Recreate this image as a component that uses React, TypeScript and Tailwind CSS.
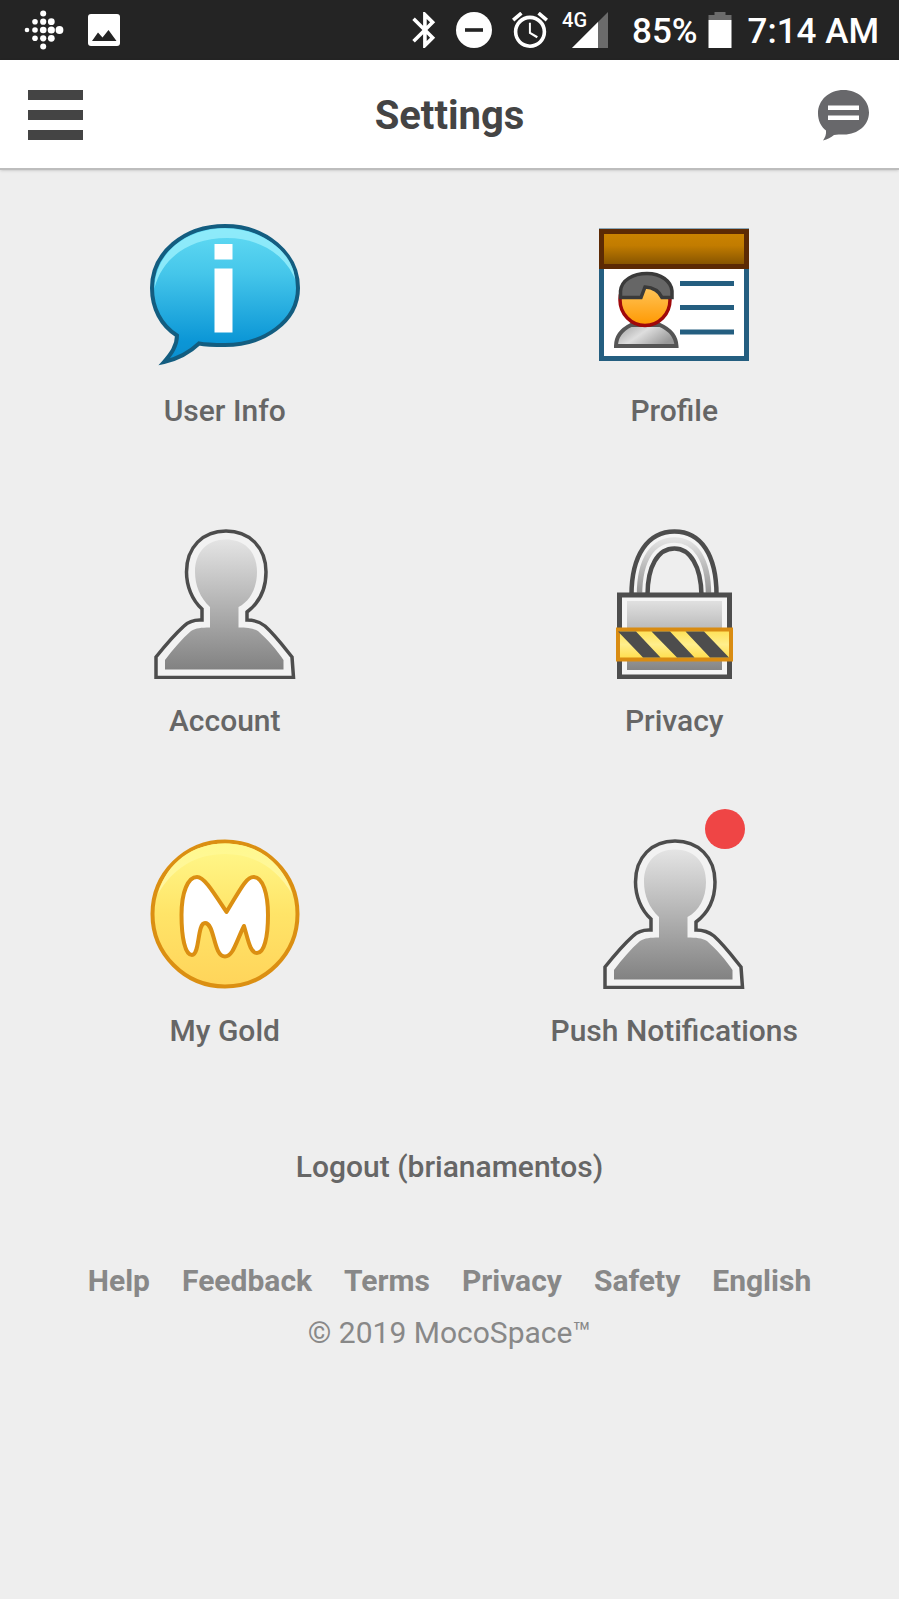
import type { ReactNode } from 'react';

interface SettingsItem {
  label: string;
  href: string;
  icon: ReactNode;
  badge?: boolean;
}

const FitbitIcon = () => (
  <svg viewBox="0 0 40 40" className="h-10 w-10" fill="#fff" aria-hidden="true">
    <circle cx="3" cy="20" r="2.3" />
    <circle cx="11" cy="11.7" r="2.8" />
    <circle cx="11" cy="20" r="2.8" />
    <circle cx="11" cy="28.3" r="2.8" />
    <circle cx="19.2" cy="3.5" r="3" />
    <circle cx="19.2" cy="11.7" r="3.1" />
    <circle cx="19.2" cy="20" r="3.3" />
    <circle cx="19.2" cy="28.3" r="3.1" />
    <circle cx="19.2" cy="36.5" r="3" />
    <circle cx="27.3" cy="11.7" r="3.4" />
    <circle cx="27.3" cy="20" r="3.6" />
    <circle cx="27.3" cy="28.3" r="3.4" />
    <circle cx="35.5" cy="20" r="3.9" />
  </svg>
);

const PictureIcon = () => (
  <svg viewBox="0 0 32 32" className="h-8 w-8" aria-hidden="true">
    <rect width="32" height="32" rx="3" fill="#fff" />
    <path d="M4 27L10 18.5L14.5 23.5L20.5 16L28.5 27Z" fill="#242424" />
  </svg>
);

const BluetoothIcon = () => (
  <svg viewBox="5 2 13 20" className="h-9 w-6" fill="#fff" aria-hidden="true">
    <path d="M17.71 7.71L12 2h-1v7.59L6.41 5 5 6.41 10.59 12 5 17.59 6.41 19 11 14.41V22h1l5.71-5.71-4.3-4.29 4.3-4.29zM13 5.83l1.88 1.88L13 9.59V5.83zm1.88 10.46L13 18.17v-3.76l1.88 1.88z" />
  </svg>
);

const DoNotDisturbIcon = () => (
  <svg viewBox="0 0 36 36" className="h-9 w-9" aria-hidden="true">
    <circle cx="18" cy="18" r="18" fill="#fff" />
    <rect x="9" y="16.2" width="18" height="3.6" fill="#242424" />
  </svg>
);

const AlarmIcon = () => (
  <svg viewBox="2 2 20 20" className="h-9 w-9" fill="#fff" aria-hidden="true">
    <path d="M22 5.72l-4.6-3.86-1.29 1.53 4.6 3.86L22 5.72zM7.88 3.39L6.6 1.86 2 5.71l1.29 1.53 4.59-3.85zM12.5 8H11.4v6l4.35 2.6.65-1.1-3.9-2.25V8zM12 4c-4.97 0-9 4.03-9 9s4.02 9 9 9a9 9 0 0 0 0-18zm0 16c-3.87 0-7-3.13-7-7s3.13-7 7-7 7 3.13 7 7-3.13 7-7 7z" />
  </svg>
);

const SignalIcon = () => (
  <svg viewBox="0 0 36 36" className="h-9 w-9" aria-hidden="true">
    <path d="M0 36L36 0V36Z" fill="#6b6b6b" />
    <path d="M0 36L26 10V36Z" fill="#fff" />
  </svg>
);

const BatteryIcon = () => (
  <svg viewBox="0 0 23 36" className="h-9 w-6" aria-hidden="true">
    <path d="M6 0H17V3H23V8H0V3H6Z" fill="#6b6b6b" />
    <rect y="8" width="23" height="28" fill="#fff" />
  </svg>
);

const ChatIcon = () => (
  <svg viewBox="0 0 51 51" className="h-[51px] w-[51px]" aria-hidden="true">
    <path
      d="M8 40.5C3 36.5 0 30.5 0 23.5C0 10 11 0 25.5 0C40 0 51 10 51 22.5C51 35 40 44.5 26 44.5C22 44.5 19 44.5 16 45C13 47.5 9.5 49.5 5 50.5C7 47.5 8.5 44.5 8 40.5Z"
      fill="#68686b"
    />
    <rect x="10" y="15.5" width="31" height="4.5" fill="#fff" />
    <rect x="10" y="25.5" width="31" height="4.5" fill="#fff" />
  </svg>
);

const InfoIcon = () => (
  <svg viewBox="0 0 150 150" className="h-full w-full" aria-hidden="true">
    <defs>
      <linearGradient id="info-fill" x1="0" y1="0" x2="0" y2="1">
        <stop offset="0" stopColor="#63dcf4" />
        <stop offset="0.35" stopColor="#45c6ea" />
        <stop offset="0.85" stopColor="#0b96d6" />
        <stop offset="1" stopColor="#0b8fcf" />
      </linearGradient>
    </defs>
    <path
      d="M27 116.5C11 106.5 2 89 2 69C2 34 34 7 75 7C116 7 148 35 148 69C148 103 113 126 75 126C66 126 57 126 49 124.5C39 134 27 140 14 143C21 135 27 127 27 116.5Z"
      fill="url(#info-fill)"
      stroke="#135d80"
      strokeWidth="4"
    />
    <path
      d="M4.5 69C5 35 35 9.5 75 9.5C112 9.5 143 33 145 60C135 36 110 19 77 19C38 19 12 40 4.5 69Z"
      fill="#92ecfb"
      opacity="0.9"
    />
    <rect x="64.5" y="25" width="18" height="15.5" fill="#fff" />
    <rect x="64.5" y="49.5" width="18" height="64" fill="#fff" />
  </svg>
);

const ProfileIcon = () => (
  <svg viewBox="0 0 150 150" className="h-full w-full" aria-hidden="true">
    <defs>
      <linearGradient id="profile-bar" x1="0" y1="0" x2="0" y2="1">
        <stop offset="0" stopColor="#cc8400" />
        <stop offset="0.4" stopColor="#c27c00" />
        <stop offset="1" stopColor="#805000" />
      </linearGradient>
      <linearGradient id="profile-face" x1="0" y1="0" x2="0" y2="1">
        <stop offset="0.2" stopColor="#ffc860" />
        <stop offset="1" stopColor="#ff9800" />
      </linearGradient>
      <linearGradient id="profile-shirt" x1="0" y1="0" x2="1" y2="0.5">
        <stop offset="0" stopColor="#999" />
        <stop offset="0.5" stopColor="#dedede" />
        <stop offset="1" stopColor="#999" />
      </linearGradient>
    </defs>
    <rect x="2.5" y="12" width="145" height="127.5" fill="#fff" stroke="#245e80" strokeWidth="5" />
    <rect x="2.5" y="12.5" width="145" height="35" fill="url(#profile-bar)" stroke="#5c2a04" strokeWidth="5" />
    <path
      d="M17 127C17 117 24 110 32 106H61C70 110 77 117 77.5 127Z"
      fill="url(#profile-shirt)"
      stroke="#555"
      strokeWidth="4"
    />
    <ellipse cx="46" cy="81" rx="25" ry="25.5" fill="url(#profile-face)" stroke="#a0080a" strokeWidth="3.5" />
    <path
      d="M21.5 78.5V72C22.5 61 34 54.5 48 54.5C62 54.5 72 62 73 72V78.5H63C60 72 54 68.5 46 68L42 78.5Z"
      fill="#666"
      stroke="#3a3a3a"
      strokeWidth="3.5"
    />
    <path d="M81 64.5H135M81 88.5H135M81 113H135" stroke="#245e80" strokeWidth="5" />
  </svg>
);

const PersonIcon = ({ id }: { id: string }) => (
  <svg viewBox="0 0 150 150" className="h-full w-full" aria-hidden="true">
    <defs>
      <linearGradient id={id} x1="0" y1="0" x2="0" y2="1">
        <stop offset="0" stopColor="#e4e4e4" />
        <stop offset="1" stopColor="#828282" />
      </linearGradient>
    </defs>
    <path
      d="M6 148.5V128C14 118 23 107 34 97C39 92 44 90.5 52 91V80C42 71 36.5 57 36.5 43C36.5 18 53 2 76 2C99 2 116 18 116 43C116 60 109 74 97 83V91C105 91 110 93 115 97C125 106 134 118 142 128L143.5 148.5Z"
      fill="#f2f2f2"
      stroke="#4d4d4d"
      strokeWidth="3.5"
    />
    <path
      d="M15 140.5V131C23 120 32 110 41 102C46 99 51 98.5 60 98.5V78C50 69 45 56 45 43C45 23 57 10.5 76 10.5C95 10.5 107 23 107 43C107 59 100 72 88.5 78V98.5C97 98.5 103 99 108 102C117 110 127 121 133.5 131V140.5Z"
      fill={`url(#${id})`}
    />
  </svg>
);

const LockIcon = () => (
  <svg viewBox="0 0 150 150" className="h-full w-full" aria-hidden="true">
    <defs>
      <linearGradient id="lock-body" x1="0" y1="0" x2="0" y2="1">
        <stop offset="0" stopColor="#e0e0e0" />
        <stop offset="1" stopColor="#858585" />
      </linearGradient>
      <linearGradient id="lock-shackle" x1="0" y1="0" x2="0" y2="1">
        <stop offset="0" stopColor="#e2e2e2" />
        <stop offset="1" stopColor="#929292" />
      </linearGradient>
      <linearGradient id="lock-band" x1="0" y1="0" x2="0" y2="1">
        <stop offset="0" stopColor="#ffe052" />
        <stop offset="0.5" stopColor="#ffee8c" />
        <stop offset="1" stopColor="#ffdc48" />
      </linearGradient>
    </defs>
    <path
      d="M32.5 66C32.5 26 49 2.5 75.5 2.5C102 2.5 117.5 26 117.5 66H102.5C102 37 91 19.5 75.5 19.5C59 19.5 48.5 37 48.5 66Z"
      fill="#f4f4f4"
      stroke="#4d4d4d"
      strokeWidth="4.5"
    />
    <path
      d="M40.5 66C40.5 30 54 11 75.5 11C96 11 109.5 30 109.5 66"
      fill="none"
      stroke="url(#lock-shackle)"
      strokeWidth="5.5"
    />
    {/* hides the bottom edge of the shackle */}
    <rect x="20.5" y="66" width="110" height="82" fill="#f4f4f4" stroke="#4d4d4d" strokeWidth="5" />
    <rect x="28" y="72" width="95" height="69" fill="url(#lock-body)" />
    <rect x="19" y="100.5" width="113" height="30" fill="url(#lock-band)" stroke="#d98c12" strokeWidth="4" />
    <path
      d="M19 102.5H37L61.5 128.5H44ZM52.5 102.5H71L95.5 128.5H78ZM86.5 102.5H105L130 128.5H111Z"
      fill="#4d4d4d"
    />
  </svg>
);

const GoldIcon = () => (
  <svg viewBox="0 0 150 150" className="h-full w-full" aria-hidden="true">
    <defs>
      <linearGradient id="gold-fill" x1="0" y1="0" x2="0" y2="1">
        <stop offset="0" stopColor="#fff98c" />
        <stop offset="0.5" stopColor="#ffe468" />
        <stop offset="1" stopColor="#ffd45a" />
      </linearGradient>
      <linearGradient id="gold-gloss" x1="0" y1="0" x2="0" y2="1">
        <stop offset="0" stopColor="#fff98e" />
        <stop offset="1" stopColor="#fff5a4" />
      </linearGradient>
    </defs>
    <circle cx="75" cy="75" r="72.5" fill="url(#gold-fill)" stroke="#db8f12" strokeWidth="4" />
    <path
      d="M8 55C17 23 43 4.5 75 4.5C107 4.5 133 23 142 55C127 29 104 15 75 15C46 15 23 29 8 55Z"
      fill="url(#gold-gloss)"
    />
    <path
      d="M47 38C54 38 62 51 76.5 73C90 51 96 38 103.5 38C113 38 118 55 118 76C118 99 114 114 107 114C100 114 98 100 94 87C86 103 83 117.500 75 117.500C63 117.500 65 84 55 84C47 84 50 116 42 116C35 116 31.500 98 31.500 76C31.500 53 38 38 47 38Z"
      fill="#fff"
      stroke="#db8f12"
      strokeWidth="4"
      strokeLinejoin="round"
    />
  </svg>
);

const items: SettingsItem[] = [
  { label: 'User Info', href: '#user-info', icon: <InfoIcon /> },
  { label: 'Profile', href: '#profile', icon: <ProfileIcon /> },
  { label: 'Account', href: '#account', icon: <PersonIcon id="account-fill" /> },
  { label: 'Privacy', href: '#privacy', icon: <LockIcon /> },
  { label: 'My Gold', href: '#my-gold', icon: <GoldIcon /> },
  { label: 'Push Notifications', href: '#push', icon: <PersonIcon id="push-fill" />, badge: true }
];

const footerLinks = ['Help', 'Feedback', 'Terms', 'Privacy', 'Safety', 'English'];

const StatusBar = () => (
  <div className="flex h-15 items-center justify-between bg-[#242424] pl-6 pr-5 text-white">
    <div className="flex items-center gap-6">
      <FitbitIcon />
      <PictureIcon />
    </div>
    <div className="flex items-center text-[35px] leading-9 font-medium">
      <div className="flex items-center gap-5">
        <BluetoothIcon />
        <DoNotDisturbIcon />
        <AlarmIcon />
      </div>
      <div className="relative ml-6">
        <span className="absolute -top-1.5 -left-2.5 text-[20px] leading-7">4G</span>
        <SignalIcon />
      </div>
      <span className="ml-6 pt-1">85%</span>
      <span className="ml-2.5">
        <BatteryIcon />
      </span>
      <span className="ml-4 pt-1">7:14 AM</span>
    </div>
  </div>
);

const Header = () => (
  <header className="flex h-[110px] items-center justify-between border-b-2 border-[#bdbdbd] bg-white px-7 pt-0.5 shadow-sm">
    <button type="button" aria-label="Menu" className="flex w-[55px] flex-col gap-2.5">
      <span className="h-2.5 w-full bg-[#444]" />
      <span className="h-2.5 w-full bg-[#444]" />
      <span className="h-2.5 w-full bg-[#444]" />
    </button>
    <h1 className="pt-0.5 text-[40px] leading-12 font-bold text-[#444]">Settings</h1>
    <button type="button" aria-label="Messages" className="flex w-[55px] justify-center">
      <ChatIcon />
    </button>
  </header>
);

const App = () => {
  return (
    <div className="min-h-screen bg-[#eee] font-['Roboto',sans-serif]">
      <StatusBar />
      <Header />

      <main className="pt-[49px] text-center text-[30px] leading-9 font-medium text-[#666]">
        <nav className="grid grid-cols-2 gap-y-25">
          {items.map(item => (
            <a key={item.label} href={item.href} className="flex flex-col items-center gap-6">
              <span className="relative h-[150px] w-[150px]">
                {item.icon}
                {item.badge && (
                  <span className="absolute -top-7.5 right-1 h-10 w-10 rounded-full bg-[#ef4545]" />
                )}
              </span>
              <span>{item.label}</span>
            </a>
          ))}
        </nav>

        <a href="#logout" className="mt-25 inline-block">
          Logout (brianamentos)
        </a>
      </main>

      <footer className="mt-[78px] pb-8 text-center text-[30px] leading-9 text-[#888]">
        <nav className="flex flex-wrap justify-center gap-x-8 font-bold">
          {footerLinks.map(link => (
            <a key={link} href={`#${link.toLowerCase()}`}>
              {link}
            </a>
          ))}
        </nav>
        <p className="mt-4">© 2019 MocoSpace™</p>
      </footer>
    </div>
  );
};

export default App;
